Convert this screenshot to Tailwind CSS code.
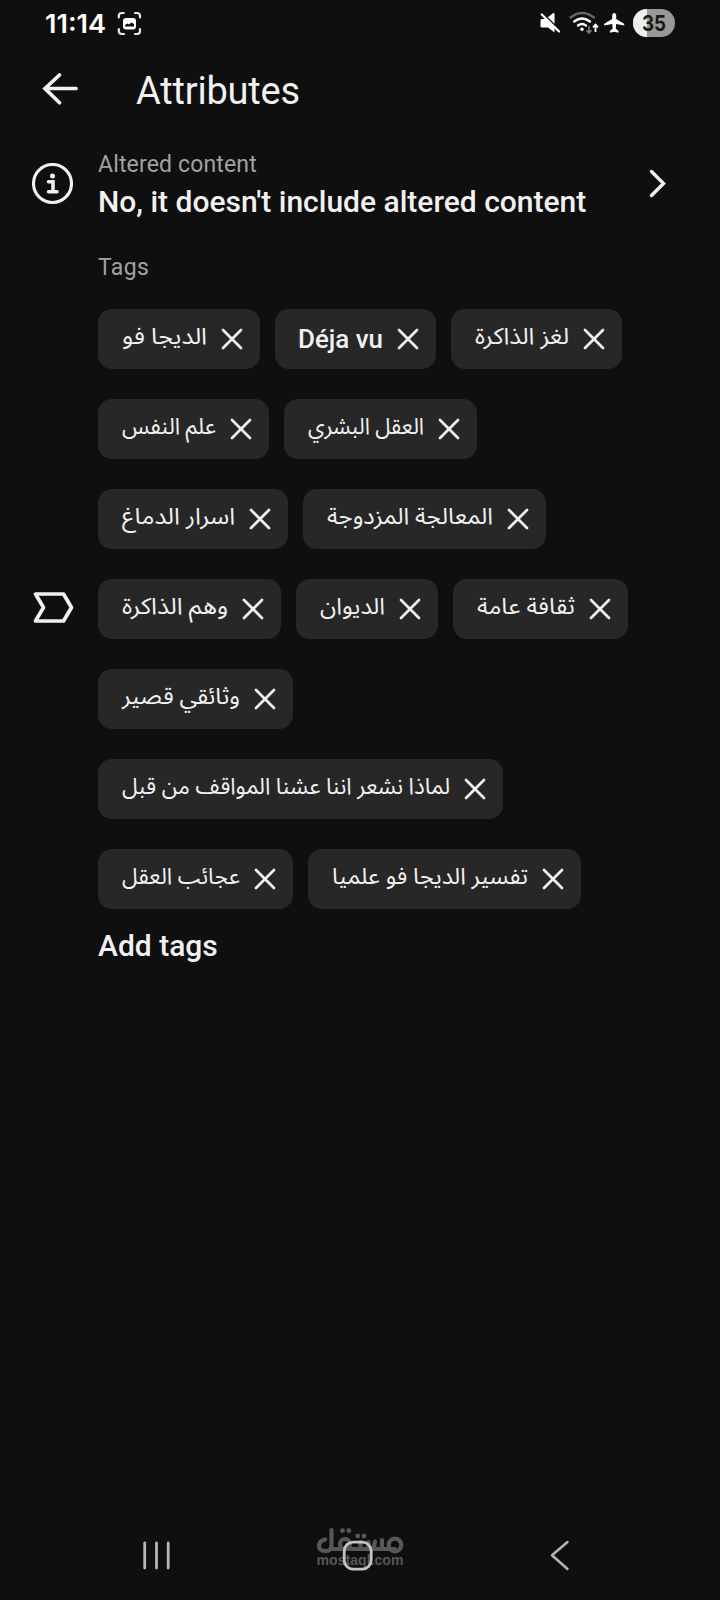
<!DOCTYPE html>
<html lang="en">
<head>
<meta charset="utf-8">
<title>Attributes</title>
<script src="https://cdn.jsdelivr.net/npm/@tailwindcss/browser@4"></script>
</head>
<body class="bg-[#0f0f0f]">
<svg class="hidden"><symbol id="x" viewBox="0 0 24 24"><path d="M3 3 21 21M21 3 3 21" fill="none" stroke="#f1f1f1" stroke-width="2.7" stroke-linecap="round"/></symbol></svg>
<div class="w-[720px] h-[1600px] flex flex-col overflow-hidden text-[#f1f1f1] font-[Roboto,'Noto_Sans_Arabic','DejaVu_Sans',sans-serif]">
  <header class="h-[46px] shrink-0 flex items-center pl-[45px] pr-[45px]">
    <svg class="w-[110px] h-[46px]" viewBox="45 0 110 46">
      <text x="45" y="33" textLength="61" lengthAdjust="spacingAndGlyphs" font-family="Inter" font-weight="600" font-size="26" fill="#fff">11:14</text>
      <g fill="none" stroke="#e8e8e8" stroke-width="2.2" stroke-linecap="round"><path d="M118.800 17.500v-1.500q0-3 3-3h2M135 13h2q3 0 3 3v1.500M140 29v2q0 3-3 3h-2M124 34h-2q-3.200 0-3.200-3v-2"/></g>
      <rect x="123" y="18" width="13" height="11.500" rx="3" fill="#fff"/><path d="M125 26.500v-1.500l2.500-1.500 1.500 1 2.500-2 2.500 1.500v2.500z" fill="#0f0f0f"/>
    </svg>
    <svg class="w-[138px] h-[46px] ml-auto" viewBox="537 0 138 46">
      <path d="M542 19h4l2-1.500 6.500 8v7l-6.500-5h-6q-1.500 0-1.500-1.500v-5.500q0-1.500 1.500-1.500zM547.500 17.500l5.500-4.300q1.500-.8 1.500 1v10z" fill="#fff"/>
      <path d="M542.500 13.500 560 30.500" stroke="#0f0f0f" stroke-width="2"/><path d="M541.800 14.500 559 31.500" stroke="#fff" stroke-width="2.300" stroke-linecap="round"/>
      <g fill="none" stroke-linecap="round" stroke-width="2.300"><path d="M570.500 17.500Q582 8.500 594 17.500" stroke="#666"/><path d="M574.200 21.500Q582 15.500 590 21.500M578 25.500Q582 22.500 586 25.500" stroke="#fff"/></g>
      <circle cx="582" cy="29.200" r="1.700" fill="#fff"/>
      <path d="M589 26v6M586.500 30.200l2.500 2.800 2.500-2.800" fill="none" stroke="#777" stroke-width="1.700"/><path d="M595.500 32v-6M593 27.300l2.500-2.800 2.500 2.800" fill="none" stroke="#fff" stroke-width="1.800"/>
      <path d="M614.200 13q2 0 2 3v3l7.500 4.500q.8.600.5 2l-8-1.500-.5 4.500 2.800 2.500v1.700l-4.300-1-4.300 1v-1.700l2.800-2.500-.5-4.500-8 1.500q-.3-1.400.5-2l7.500-4.500v-3q0-3 2-3z" fill="#fff"/>
      <clipPath id="b"><rect x="633" y="9" width="42" height="28" rx="14"/></clipPath>
      <g clip-path="url(#b)"><path d="M633 9h42v28h-42z" fill="#989898"/><path d="M633 9h14v28h-14z" fill="#eee"/></g>
      <text x="642" y="31" textLength="24" lengthAdjust="spacingAndGlyphs" font-family="Inter" font-weight="700" font-size="21.500" fill="#181818">35</text>
    </svg>
  </header>
  <div class="h-[86px] shrink-0 flex items-center pl-[42px]">
    <svg class="w-9 h-[34px]" viewBox="0 0 36 34"><path d="M17.500 3 3 16.500 17.500 30.700M3 16.500H34" fill="none" stroke="#f1f1f1" stroke-width="3.700" stroke-linecap="round"/></svg>
    <h1 class="ml-[58px] text-[38px] leading-[46px] tracking-[-0.2px] mt-[3px]">Attributes</h1>
  </div>
  <div class="h-[112px] shrink-0 flex pl-8 pt-[18px]">
    <svg class="w-[41px] h-[42px] mt-[13px]" viewBox="0 0 41 42"><circle cx="20.500" cy="20.500" r="19" fill="none" stroke="#f1f1f1" stroke-width="3.100"/><circle cx="20.500" cy="13" r="2.500" fill="#f1f1f1"/><path d="M16.500 18.700h4.500v10M16.500 28.700h8.500" fill="none" stroke="#f1f1f1" stroke-width="3.500" stroke-linecap="round"/></svg>
    <div class="ml-[25px] w-[552px]">
      <div class="text-[23px] leading-[28px] tracking-[0.15px] text-[#a2a2a2] mt-px">Altered content</div>
      <div class="text-[30px] leading-[34px] mt-[6px] font-medium whitespace-nowrap">No, it doesn't include altered content</div>
    </div>
    <svg class="w-5 h-8 mt-[18px] -ml-[2px]" viewBox="0 0 20 32"><path d="M3.500 3.500 15.500 15.500 3.500 27.500" fill="none" stroke="#f1f1f1" stroke-width="3.400" stroke-linecap="round"/></svg>
  </div>
  <div class="flex shrink-0 pl-8">
    <svg class="w-[42px] h-[34px] mt-[347px]" viewBox="0 0 42 34"><path d="M3.500 3H31.500L39.500 16.500 31.500 30H3.500L11.500 16.500Z" fill="none" stroke="#f1f1f1" stroke-width="3.700" stroke-linejoin="round"/></svg>
    <div class="ml-6 pt-[10px]">
      <div class="text-[23px] leading-[28px] tracking-[0.35px] text-[#a2a2a2]">Tags</div>
      <div id="tags" class="mt-[27px] flex flex-col gap-[30px]"></div>
      <div class="mt-5 text-[30px] leading-[34px] font-medium">Add tags</div>
    </div>
  </div>
  <footer class="mt-auto h-[90px] shrink-0">
    <svg class="w-[720px] h-[90px]" viewBox="0 0 720 90">
      <path d="M144.700 33V58M156.500 33V58M168.200 33V58" stroke="#b5b5b5" stroke-width="2.800" stroke-linecap="round"/>
      <g fill="none" stroke="#575757" stroke-width="4.200" stroke-linecap="round" stroke-linejoin="round"><path d="M325 29.500Q319 31 319 36T326 41Q331.500 41 331.500 35V20M331.500 39H395"/><circle cx="345" cy="34" r="5"/><circle cx="395" cy="35" r="6.300"/><path d="M360.500 32V39M368.500 32V39M375 31.500 373.500 39M382 30V39"/></g>
      <g fill="#575757"><circle cx="342.500" cy="20.700" r="2.400"/><circle cx="348.800" cy="20.700" r="2.400"/><circle cx="357.700" cy="26" r="2.400"/><circle cx="364" cy="26" r="2.400"/></g>
      <text x="316.500" y="54.500" textLength="87" lengthAdjust="spacingAndGlyphs" font-family="Liberation Sans" font-weight="700" font-size="14" fill="#575757">mostaql.com</text>
      <rect x="344.200" y="32.200" width="27" height="27" rx="9" fill="none" stroke="#c4c4c4" stroke-width="2.800"/>
      <path d="M567.500 32 552 45.200 567.500 59" fill="none" stroke="#b5b5b5" stroke-width="2.500" stroke-linecap="round" stroke-linejoin="round"/>
    </svg>
  </footer>
</div>
<script>
// Each tag: label, chip width
const rows = [
  [['الديجا فو',162],['Déja vu',161],['لغز الذاكرة',171]],
  [['علم النفس',171],['العقل البشري',193]],
  [['اسرار الدماغ',190],['المعالجة المزدوجة',243]],
  [['وهم الذاكرة',183],['الديوان',142],['ثقافة عامة',175]],
  [['وثائقي قصير',195]],
  [['لماذا نشعر اننا عشنا المواقف من قبل',405]],
  [['عجائب العقل',195],['تفسير الديجا فو علميا',273]]
];
document.getElementById('tags').innerHTML = rows.map(r => '<div class="flex gap-[15px]">' + r.map(([t,w]) => {
  const latin = t[0] === 'D';
  const tw = latin ? 85 : w - 77;
  const attrs = latin ? 'y="39" font-size="26" font-weight="500"' : 'y="35" font-size="23" direction="rtl"';
  return `<div class="h-[60px] rounded-[14px] bg-[#272727] flex items-center shrink-0" style="width:${w}px"><svg class="h-[60px] ml-6 overflow-visible shrink-0" style="width:${tw}px"><text x="${latin ? -1 : tw}" ${attrs} textLength="${tw}" lengthAdjust="spacingAndGlyphs" fill="#f1f1f1">${t}</text></svg><svg class="w-6 h-6 ml-auto mr-4 shrink-0"><use href="#x"/></svg></div>`;
}).join('') + '</div>').join('');
</script>
</body>
</html>
